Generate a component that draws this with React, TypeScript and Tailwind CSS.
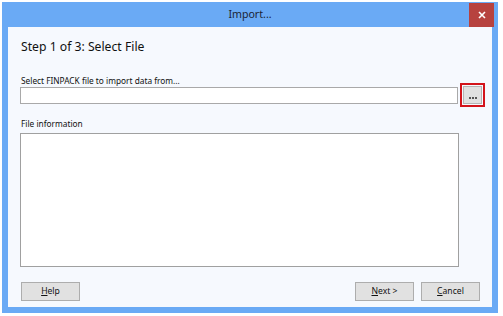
import React from "react";

const font = { fontFamily: '"Noto Sans", "Open Sans", sans-serif' };

function Btn({ m, rest }: { m: string; rest: string }) {
  return (
    <div className="flex h-[19px] w-[59px] shrink-0 items-center justify-center border border-[#adadad] bg-[#e1e1e1] text-[8.6px] leading-none text-[#111]">
      <span>
        <span className="underline underline-offset-[1px]">{m}</span>
        {rest}
      </span>
    </div>
  );
}

export default function App() {
  return (
    <div className="h-[316px] w-[503px] bg-white pl-[2px] pt-[2px]" style={font}>
      <div className="flex h-[311px] w-[496px] flex-col bg-[#6aaaf5]">
        <div className="relative flex h-[25px] shrink-0 items-center justify-center">
          <span className="pt-[1px] text-[10.6px] text-[#1a2433]">Import...</span>
          <div className="absolute right-[4px] top-[1px] flex h-[24px] w-[25px] items-center justify-center bg-[#b7423f]">
            <svg width="8" height="8" viewBox="0 0 8 8">
              <path d="M1 1 L7 7 M7 1 L1 7" stroke="#ffffff" strokeWidth="1.6" />
            </svg>
          </div>
        </div>
        <div className="mx-[6px] flex h-[280px] shrink-0 flex-col bg-[#f6f9fe] pl-[12px] pr-[12px]">
          <div className="mt-[12px] pl-[1px] text-[12.2px] leading-[16px] text-[#111]">
            Step 1 of 3: Select File
          </div>
          <div className="mt-[20px] pl-[1px] text-[8.3px] leading-[11px] text-[#111]">
            Select FINPACK file to import data from...
          </div>
          <div className="mt-[-3px] flex items-start">
            <div className="mt-[4px] h-[17px] w-[438px] shrink-0 border border-[#a9a9a9] bg-white" />
            <div className="ml-[2px] flex h-[24px] w-[25px] shrink-0 items-center justify-center border-2 border-[#d3141b] bg-[#f6f9fe]">
              <div className="flex h-[18px] w-[19px] items-end justify-center border border-[#b5b5b5] bg-[#e1e1e1] pb-[4px]">
                <svg width="8" height="2" viewBox="0 0 8 2">
                  <rect x="0" y="0" width="2" height="2" fill="#555" />
                  <rect x="3" y="0" width="2" height="2" fill="#555" />
                  <rect x="6" y="0" width="2" height="2" fill="#555" />
                </svg>
              </div>
            </div>
          </div>
          <div className="mt-[11px] pl-[1px] text-[8.3px] leading-[11px] text-[#111]">
            File information
          </div>
          <div className="mt-[4px] h-[134px] w-[439px] shrink-0 border border-[#a0a0a0] bg-white" />
          <div className="mt-[15px] flex items-center pl-[1px]">
            <Btn m="H" rest="elp" />
            <div className="flex-1" />
            <Btn m="N" rest="ext >" />
            <div className="w-[7px] shrink-0" />
            <Btn m="C" rest="ancel" />
          </div>
        </div>
      </div>
    </div>
  );
}
